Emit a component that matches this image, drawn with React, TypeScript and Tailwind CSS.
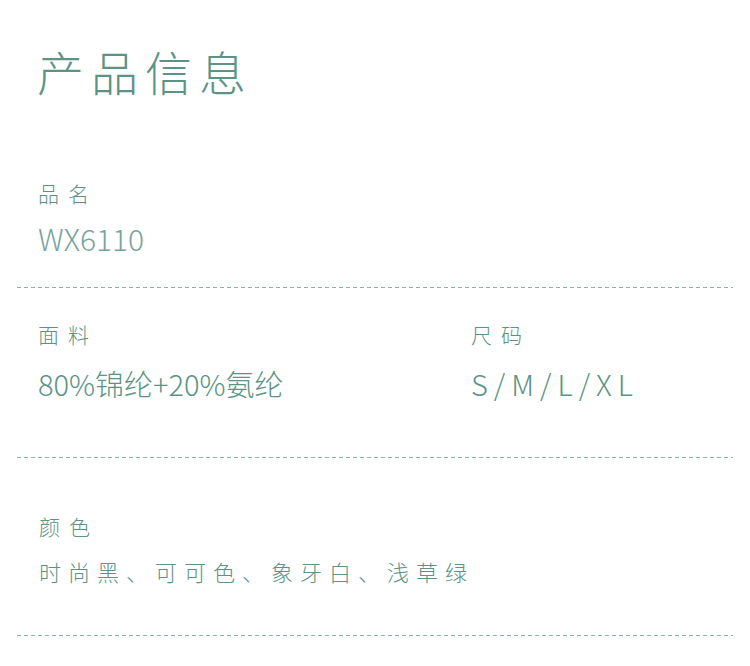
const font = { fontFamily: '"Noto Sans CJK SC", "Noto Sans", sans-serif' };

const Dashed = () => (
  <div className="mx-[17px] h-px bg-[linear-gradient(to_right,#86b4a9_4px,transparent_4px)] bg-[length:7px_1px] bg-repeat-x" />
);

const Label = ({ children }: { children: React.ReactNode }) => (
  <div className="text-[21px] leading-none tracking-[9px] text-[#5b9385] font-light">{children}</div>
);

export default function App() {
  return (
    <div className="w-[750px] h-[666px] bg-white overflow-hidden" style={font}>
      <div className="pl-[37px] pt-[47px] pb-[89px]">
        <h1 className="text-[47px] leading-none tracking-[7px] text-[#5b9385] font-light">产品信息</h1>
      </div>

      <div className="pl-[38px] pb-[34px]">
        <Label>品名</Label>
        <div className="mt-[19px] text-[30px] leading-none text-[#78a49c] font-light">WX6110</div>
      </div>
      <Dashed />

      <div className="grid grid-cols-[433px_1fr] pl-[38px] pt-[36px] pb-[59px]">
        <div>
          <Label>面料</Label>
          <div className="mt-[24px] text-[29px] leading-none text-[#5b9385] font-light">80%锦纶+20%氨纶</div>
        </div>
        <div>
          <Label>尺码</Label>
          <div className="mt-[24px] text-[29px] leading-none tracking-[6px] text-[#5b9385] font-light">S/M/L/XL</div>
        </div>
      </div>
      <Dashed />

      <div className="pl-[39px] pt-[58px] pb-[53px]">
        <Label>颜色</Label>
        <div className="mt-[23px] text-[22px] leading-none tracking-[7px] text-[#5b9385] font-light">时尚黑、可可色、象牙白、浅草绿</div>
      </div>
      <Dashed />
    </div>
  );
}
